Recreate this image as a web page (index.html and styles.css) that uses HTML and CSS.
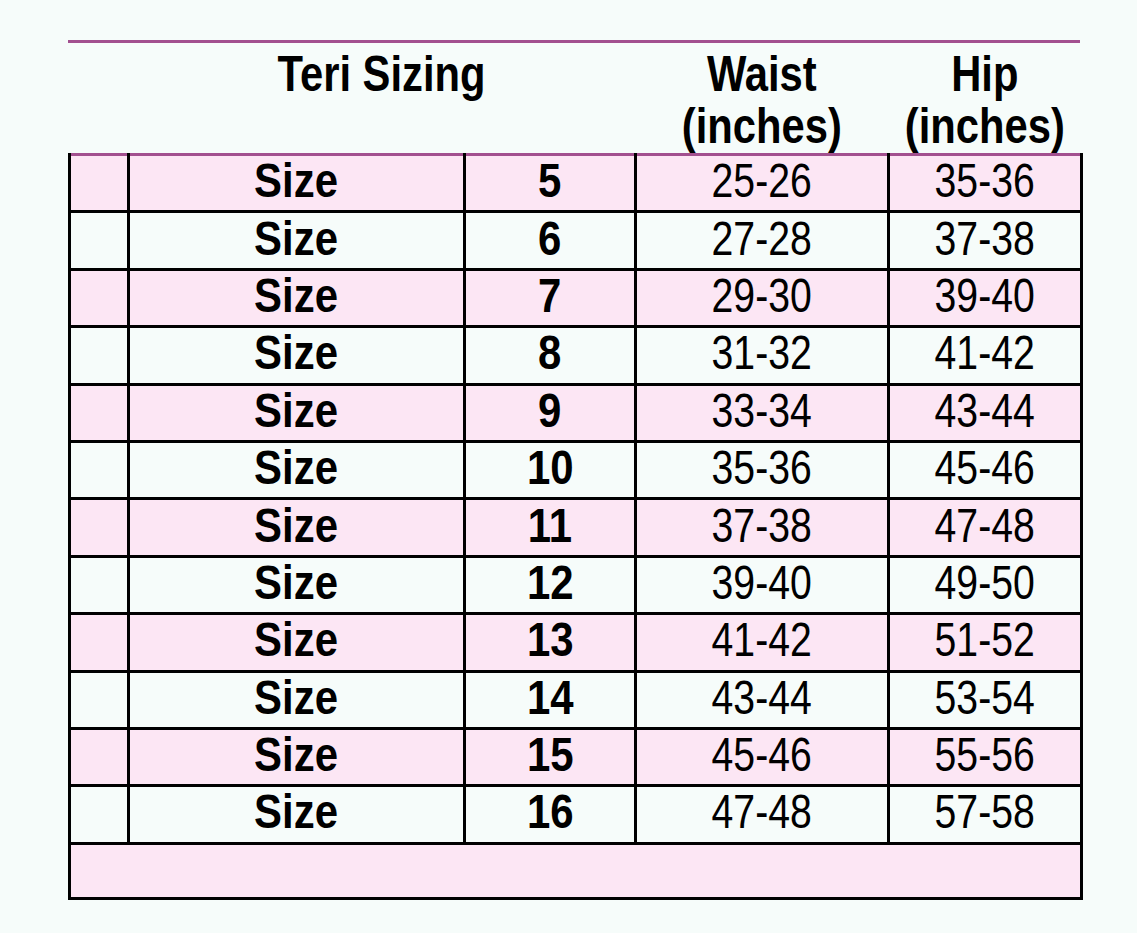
FILE: index.html
```html
<!DOCTYPE html>
<html>
<head>
<meta charset="utf-8">
<link rel="stylesheet" href="styles.css">
<title>Teri Sizing</title>
</head>
<body>
<div class="chart">
  <div class="rule"></div>
  <table class="sizes">
    <colgroup>
      <col class="c1"><col class="c2"><col class="c3"><col class="c4"><col class="c5">
    </colgroup>
    <thead>
      <tr class="head">
        <th></th>
        <th colspan="2"><span class="n">Teri Sizing</span></th>
        <th><span class="n">Waist<br>(inches)</span></th>
        <th><span class="n">Hip<br>(inches)</span></th>
      </tr>
    </thead>
    <tbody>
      <tr class="pink first"><td></td><td class="b"><span class="n">Size</span></td><td class="b"><span class="n">5</span></td><td><span class="n">25-26</span></td><td><span class="n">35-36</span></td></tr>
      <tr><td></td><td class="b"><span class="n">Size</span></td><td class="b"><span class="n">6</span></td><td><span class="n">27-28</span></td><td><span class="n">37-38</span></td></tr>
      <tr class="pink"><td></td><td class="b"><span class="n">Size</span></td><td class="b"><span class="n">7</span></td><td><span class="n">29-30</span></td><td><span class="n">39-40</span></td></tr>
      <tr><td></td><td class="b"><span class="n">Size</span></td><td class="b"><span class="n">8</span></td><td><span class="n">31-32</span></td><td><span class="n">41-42</span></td></tr>
      <tr class="pink"><td></td><td class="b"><span class="n">Size</span></td><td class="b"><span class="n">9</span></td><td><span class="n">33-34</span></td><td><span class="n">43-44</span></td></tr>
      <tr><td></td><td class="b"><span class="n">Size</span></td><td class="b"><span class="n">10</span></td><td><span class="n">35-36</span></td><td><span class="n">45-46</span></td></tr>
      <tr class="pink"><td></td><td class="b"><span class="n">Size</span></td><td class="b"><span class="n">11</span></td><td><span class="n">37-38</span></td><td><span class="n">47-48</span></td></tr>
      <tr><td></td><td class="b"><span class="n">Size</span></td><td class="b"><span class="n">12</span></td><td><span class="n">39-40</span></td><td><span class="n">49-50</span></td></tr>
      <tr class="pink"><td></td><td class="b"><span class="n">Size</span></td><td class="b"><span class="n">13</span></td><td><span class="n">41-42</span></td><td><span class="n">51-52</span></td></tr>
      <tr><td></td><td class="b"><span class="n">Size</span></td><td class="b"><span class="n">14</span></td><td><span class="n">43-44</span></td><td><span class="n">53-54</span></td></tr>
      <tr class="pink"><td></td><td class="b"><span class="n">Size</span></td><td class="b"><span class="n">15</span></td><td><span class="n">45-46</span></td><td><span class="n">55-56</span></td></tr>
      <tr><td></td><td class="b"><span class="n">Size</span></td><td class="b"><span class="n">16</span></td><td><span class="n">47-48</span></td><td><span class="n">57-58</span></td></tr>
      <tr class="pink empty"><td colspan="5"></td></tr>
    </tbody>
  </table>
</div>
</body>
</html>
```
FILE: styles.css
```css
html, body {
  margin: 0;
  padding: 0;
  background: #f6fcfa;
}
body {
  font-family: "Liberation Sans", Arial, sans-serif;
  color: #000;
}
.chart {
  padding-top: 40px;
  padding-left: 68px;
  width: 1012px;
}
.rule {
  height: 3px;
  background: #a2508f;
}
.sizes {
  border-collapse: collapse;
  table-layout: fixed;
  width: 1012px;
}
.c1 { width: 59px; }
.c2 { width: 336px; }
.c3 { width: 171px; }
.c4 { width: 253px; }
.c5 { width: 193px; }

.n {
  display: inline-block;
  vertical-align: top;
  transform: scaleX(0.8);
  transform-origin: center;
}
.head th {
  height: 105px;
  padding: 5px 0 0 0;
  vertical-align: top;
  font-size: 50px;
  line-height: 52px;
  font-weight: bold;
  text-align: center;
  border: none;
}
.head th .n { transform: scaleX(0.835); }
.sizes td {
  border: 3px solid #000;
  height: 48.4px;
  padding: 0 0 6px 0;
  text-align: center;
  vertical-align: middle;
  font-size: 49px;
  line-height: 48px;
  font-weight: normal;
}
.sizes td.b { font-weight: bold; }
.sizes td.b .n { transform: scaleX(0.855); }
.sizes tr.first td { border-top-color: #a2508f; }
.sizes tr.pink td { background: #fce6f4; }
.sizes tr.empty td { height: 52px; padding: 0; }
```
